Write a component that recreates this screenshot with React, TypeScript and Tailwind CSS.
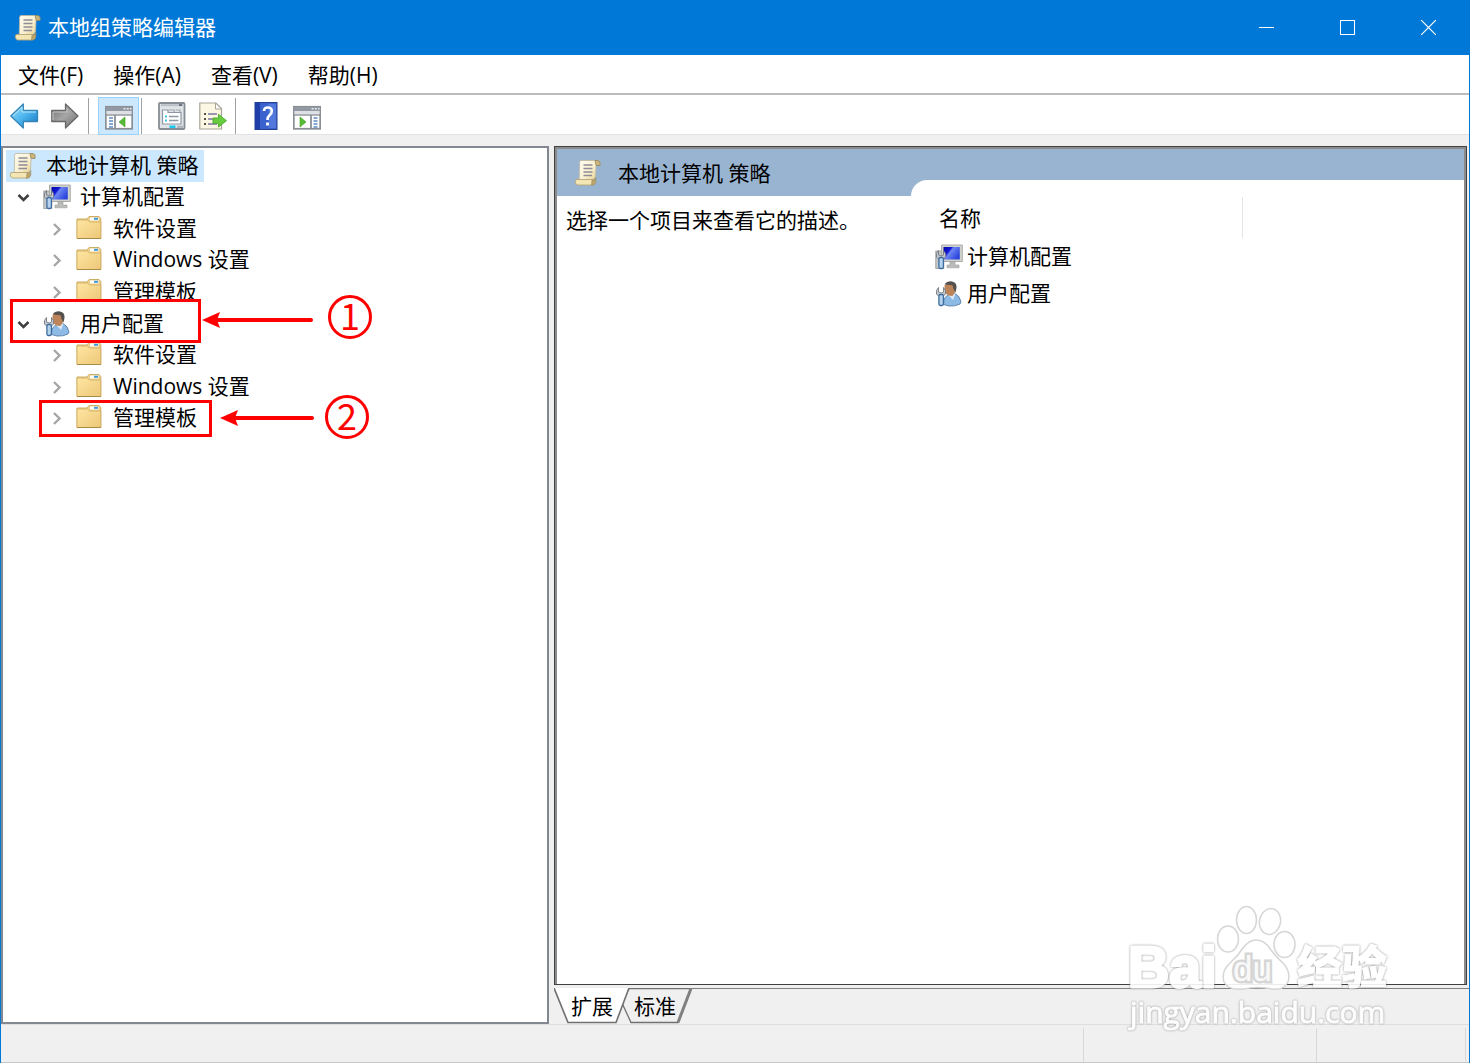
import { useState, type ReactNode } from "react";

interface IconProps {
  className?: string;
}

function ScrollIcon({ className = "" }: IconProps) {
  return (
    <svg viewBox="0 0 28 28" className={`size-7 shrink-0 ${className}`} aria-hidden="true">
      <defs>
        <linearGradient id="paper" x1="0" y1="0" x2="1" y2="1">
          <stop offset="0" stopColor="#fffdf3" />
          <stop offset="0.6" stopColor="#f8efce" />
          <stop offset="1" stopColor="#e3cf8e" />
        </linearGradient>
      </defs>
      <path d="M6.5 1.500 Q5 3 5.6 6 L5.2 21 H19 L21.5 18 L22 7 L22 1.500 Z" fill="url(#paper)" stroke="#bfb6a0" strokeWidth="0.8" />
      <path d="M21 1.500 H24 Q27 2 26 6.500 H22.3 Z" fill="#cdb67b" stroke="#96885f" strokeWidth="0.8" />
      <path d="M2 20.5 H18.5 V26 H3.5 Q.3 24.5 2 20.5 Z" fill="#f4e6b4" stroke="#b5a676" strokeWidth="0.9" />
      <path d="M18 21 Q20.5 21.5 21.8 18.5 V23 Q21 26.5 17.5 26.3 Z" fill="#bfa667" stroke="#96885f" strokeWidth="0.6" />
      <path d="M9.500 6 H18.500 M9.5 9.500 H18.5 M9.5 13 H18.5 M9.5 16.500 H18" stroke="#8f8d98" strokeWidth="1.4" />
    </svg>
  );
}

function Wrench() {
  return (
    <g>
      <path d="M3.500 7.500 L1.500 10.500 V14 L4.500 17 H7.5 L10.5 14 V10.500 L8.5 7.500 V12 L6.3 13 L3.500 12 Z" fill="#c3c9ce" stroke="#747b81" strokeWidth="0.9" />
      <rect x="3.900" y="14.500" width="4.500" height="11" rx="1.4" fill="#b5d3ec" stroke="#3f6c9e" strokeWidth="1.3" />
    </g>
  );
}

function ComputerIcon({ className = "" }: IconProps) {
  return (
    <svg viewBox="0 0 28 28" className={`size-7 shrink-0 ${className}`} aria-hidden="true">
      <defs>
        <linearGradient id="screen" x1="0" y1="0" x2="1" y2="0.6">
          <stop offset="0" stopColor="#0509a4" />
          <stop offset="0.38" stopColor="#1319d6" />
          <stop offset="0.48" stopColor="#6d86f3" />
          <stop offset="1" stopColor="#2b45dd" />
        </linearGradient>
      </defs>
      <rect x="0.8" y="8" width="8" height="17.5" fill="#c4c7c9" stroke="#96999b" strokeWidth="0.8" />
      <path d="M6.5 2 H27.3 V18.5 H6.5 Z" fill="#d0d1cb" stroke="#a4a6a4" strokeWidth="0.9" />
      <rect x="8.500" y="4" width="16.300" height="12.500" fill="url(#screen)" />
      <path d="M15 18.8 H20 V22 H24 V24.8 H12 V22 H15 Z" fill="#b9bcb9" stroke="#9a9d9b" strokeWidth="0.6" />
      <Wrench />
    </svg>
  );
}

function UserIcon({ className = "" }: IconProps) {
  return (
    <svg viewBox="0 0 28 28" className={`size-7 shrink-0 ${className}`} aria-hidden="true">
      <path d="M8.5 24.5 L9 19 L13 14.5 L20 13.5 Q25 16 26 22 L25 24 Q20 26.5 14 26 Z" fill="#8ebbe6" stroke="#587fa8" strokeWidth="0.9" />
      <path d="M13 14.5 L18 20 L20.5 13.5 Z" fill="#dbeaf6" />
      <path d="M9.500 5.5 Q12 3 16 3.5 L20.5 6 L20 12 L17.5 16 L13 15.500 L9.500 12 Z" fill="#bd8459" />
      <path d="M9.500 4.500 Q12 1 17 1.4 Q22 2 21.5 8 L20.5 12.500 L18.5 9 L17.5 5.3 Z" fill="#55514e" />
      <Wrench />
    </svg>
  );
}

function FolderIcon({ className = "" }: IconProps) {
  return (
    <svg viewBox="0 0 28 28" className={`size-7 shrink-0 ${className}`} aria-hidden="true">
      <defs>
        <linearGradient id="folder" x1="0" y1="0" x2="1" y2="1">
          <stop offset="0" stopColor="#ffe6a3" />
          <stop offset="1" stopColor="#ecc777" />
        </linearGradient>
      </defs>
      <path d="M1 23.500 V4 H11 L13 1.500 H23 L24.800 3.500 V23.500 Z" fill="#ecd08a" stroke="#c9a65a" strokeWidth="0.9" />
      <rect x="14" y="2.500" width="8.5" height="3" fill="#fff" />
      <rect x="18" y="2.800" width="4" height="2" fill="#3f97dc" />
      <path d="M1 23.500 V5 H11.5 L13.5 7 H24.800 V23.500 Z" fill="url(#folder)" stroke="#d1ae63" strokeWidth="0.8" />
      <path d="M1 23.500 H25" stroke="#a98b48" strokeWidth="1" />
    </svg>
  );
}

function BackArrow() {
  return (
    <svg viewBox="0 0 30 28" className="h-7 w-[30px]" aria-hidden="true">
      <defs>
        <linearGradient id="back" x1="0" y1="0" x2="1" y2="1">
          <stop offset="0" stopColor="#a5e0fb" />
          <stop offset="0.5" stopColor="#4bb5ee" />
          <stop offset="1" stopColor="#1672bf" />
        </linearGradient>
      </defs>
      <path d="M0.800 14 L13.300 2 V8.5 H27.500 V19.5 H13.300 V26 Z" fill="url(#back)" stroke="#3686b8" strokeWidth="1.3" strokeLinejoin="round" />
      <path d="M3 13.8 L12 5.2 V10 H26" fill="none" stroke="#b9e8fc" strokeWidth="1" />
    </svg>
  );
}

function ForwardArrow() {
  return (
    <svg viewBox="0 0 30 28" className="h-7 w-[30px]" aria-hidden="true">
      <defs>
        <linearGradient id="forward" x1="0" y1="0" x2="1" y2="1">
          <stop offset="0" stopColor="#6e6e6e" />
          <stop offset="0.5" stopColor="#a6a6a6" />
          <stop offset="1" stopColor="#6b6b6b" />
        </linearGradient>
      </defs>
      <path d="M27 14 L14.500 2 V8.5 H0.800 V19.5 H14.500 V26 Z" fill="url(#forward)" stroke="#686868" strokeWidth="1.3" strokeLinejoin="round" />
      <path d="M2 18 V10 H16 V5.5" fill="none" stroke="#c3c3c3" strokeWidth="1" />
    </svg>
  );
}

function PaneIcon({ side }: { side: "left" | "right" }) {
  const left = side === "left";
  const lines = left ? 4 : 20.5;
  return (
    <svg viewBox="0 0 28 28" className="size-7" aria-hidden="true">
      <rect x="0.8" y="4.8" width="26.4" height="22" fill="#fff" stroke="#8b9097" strokeWidth="1.8" />
      <rect x="1" y="5" width="26" height="4" fill="#9399a2" />
      <path d="M18.5 6.8 H20.5 M21.8 6.8 H23.8 M25 6.8 H26.5" stroke="#e6e9ed" strokeWidth="1.6" />
      <rect x="1.6" y="9" width="24.8" height="3.3" fill="#dde1e6" />
      <path d="M1 13 H27" stroke="#8b9097" strokeWidth="1.4" />
      <path d={left ? "M10 13 V26.5" : "M18 13 V26.5"} stroke="#8b9097" strokeWidth="1.8" />
      <path d={`M${lines} 16 h4 M${lines} 19 h4 M${lines} 22 h4 M${lines} 25 h4`} stroke="#5e8cc2" strokeWidth="1.5" />
      <path d={left ? "M20 15 V25 L14 20 Z" : "M7 15 V25 L13 20 Z"} fill="#56bb35" stroke="#3c9e22" strokeWidth="0.6" />
    </svg>
  );
}

function PropertiesIcon() {
  return (
    <svg viewBox="0 0 28 28" className="size-7" aria-hidden="true">
      <rect x="1" y="1" width="25.5" height="26" rx="1" fill="#e1e4e7" stroke="#878d94" strokeWidth="1.8" />
      <path d="M3 3.2 H25" stroke="#b9bec7" strokeWidth="2" />
      <path d="M21 3 H24" stroke="#596273" strokeWidth="1.6" />
      <path d="M4.5 8 H10 V10.5 H23 V22 H4.5 Z" fill="#fff" stroke="#8d97a5" strokeWidth="1.2" />
      <path d="M11 8 H16 V10 M17.5 8 H22 V10" fill="none" stroke="#9fa7b2" strokeWidth="1.2" />
      <path d="M7 14.5 H9 M7 18.5 H9" stroke="#38c5e8" strokeWidth="1.8" />
      <path d="M11 14.5 H20.5 M11 18.5 H20.5" stroke="#8d97a5" strokeWidth="1.4" />
      <rect x="11.5" y="23.5" width="6" height="2.5" fill="#1bc8ef" />
      <path d="M19 24.8 H25" stroke="#aeb3b9" strokeWidth="2.2" />
    </svg>
  );
}

function ExportIcon() {
  return (
    <svg viewBox="0 0 28 28" className="size-7" aria-hidden="true">
      <path d="M.8 1 H17 L22.5 6.5 V27 H.8 Z" fill="#fbf7e3" stroke="#a8a595" strokeWidth="1.2" />
      <path d="M16.5 1 V7 H22.5 Z" fill="#fff" stroke="#a8a595" strokeWidth="1" />
      <path d="M5 12 H7 M5 17 H7 M5 22 H7" stroke="#54504b" strokeWidth="1.8" />
      <path d="M9 12 H18 M9 17 H15 M9 22 H18" stroke="#7b76a0" strokeWidth="1.3" />
      <path d="M14 16 H19.5 V12.3 L27.5 18.7 L19.5 25 V21.3 H14 Z" fill="#67cd40" stroke="#48aa28" strokeWidth="0.9" />
    </svg>
  );
}

function HelpIcon() {
  return (
    <svg viewBox="0 0 28 28" className="size-7" aria-hidden="true">
      <rect x="3" y="0.5" width="22" height="27" fill="#3a62cf" stroke="#24408f" strokeWidth="1" />
      <path d="M3 .5 H8 V27.5 H3 Z" fill="#1f3ea8" />
      <path d="M16 2 H24 V26 H17 Z" fill="#5b82de" opacity="0.7" />
      <path d="M12 9 Q12 5.500 15.500 5.500 Q19.8 5.500 19.8 9 Q19.8 11.5 17.500 13.3 Q15.500 14.8 15.500 18" fill="none" stroke="#fff" strokeWidth="2.6" />
      <rect x="14.100" y="20.5" width="2.800" height="3" fill="#fff" />
    </svg>
  );
}

function ToolButton({ label, active = false, children }: { label: string; active?: boolean; children: ReactNode }) {
  return (
    <button
      type="button"
      aria-label={label}
      className={`flex h-[38px] w-[41px] items-center justify-center border ${
        active ? "border-[#99d1ff] bg-[#cce8ff]" : "border-transparent"
      }`}
    >
      {children}
    </button>
  );
}

function ToolDivider() {
  return <span className="mr-[9px] ml-0.5 h-9 w-px bg-[#a0a0a0]" />;
}

type TreeIcon = "scroll" | "computer" | "user" | "folder";

interface TreeRow {
  level: number;
  icon: TreeIcon;
  text: string;
}

const treeRows: TreeRow[] = [
  { level: 0, icon: "scroll", text: "本地计算机 策略" },
  { level: 1, icon: "computer", text: "计算机配置" },
  { level: 2, icon: "folder", text: "软件设置" },
  { level: 2, icon: "folder", text: "Windows 设置" },
  { level: 2, icon: "folder", text: "管理模板" },
  { level: 1, icon: "user", text: "用户配置" },
  { level: 2, icon: "folder", text: "软件设置" },
  { level: 2, icon: "folder", text: "Windows 设置" },
  { level: 2, icon: "folder", text: "管理模板" },
];

const icons = {
  scroll: ScrollIcon,
  computer: ComputerIcon,
  user: UserIcon,
  folder: FolderIcon,
};

function Chevron({ open }: { open: boolean }) {
  return (
    <svg viewBox="0 0 34 20" className="mr-[3px] h-5 w-[34px] shrink-0" fill="none" aria-hidden="true">
      {open ? (
        <path d="M12.5 8 L17.5 13 L22.5 8" stroke="#404040" strokeWidth="2.6" />
      ) : (
        <path d="M15 5 L20.5 10.500 L15 16" stroke="#a6a6a6" strokeWidth="2.4" />
      )}
    </svg>
  );
}

function PolicyTree() {
  const [selected, setSelected] = useState(0);

  return (
    <ul className="flex h-[284px] flex-col" role="tree">
      {treeRows.map((row, i) => {
        const Icon = icons[row.icon];
        return (
          <li key={i} className="flex flex-1" role="treeitem" aria-selected={i === selected}>
            <button
              type="button"
              onClick={() => setSelected(i)}
              className={`flex items-center pr-1.5 whitespace-nowrap ${
                row.level === 2 ? "pl-[33px]" : row.level === 0 ? "pl-[3px]" : ""
              } ${i === selected ? "bg-[#cce8ff]" : ""}`}
            >
              {row.level > 0 && <Chevron open={row.level === 1} />}
              <Icon className="mr-[9px]" />
              <span className="pb-0.5">{row.text}</span>
            </button>
          </li>
        );
      })}
    </ul>
  );
}

function StepArrow({ className = "" }: IconProps) {
  return (
    <svg viewBox="0 0 112 18" className={`absolute h-[18px] w-28 ${className}`} aria-hidden="true">
      <path d="M12 9 H109" stroke="#f00" strokeWidth="4" strokeLinecap="round" />
      <path d="M0 9 L18 1 L15 9 L18 17 Z" fill="#f00" />
    </svg>
  );
}

function ShortStepArrow({ className = "" }: IconProps) {
  return (
    <svg viewBox="0 0 96 18" className={`absolute h-[18px] w-24 ${className}`} aria-hidden="true">
      <path d="M12 9 H92" stroke="#f00" strokeWidth="4" strokeLinecap="round" />
      <path d="M0 9 L18 1 L15 9 L18 17 Z" fill="#f00" />
    </svg>
  );
}

function StepNumber({ value, className = "" }: { value: number; className?: string }) {
  return (
    <span
      className={`absolute flex size-11 items-center justify-center rounded-full border-[3px] border-[#f00] pb-1.5 font-['Noto_Sans_CJK_SC',sans-serif] text-4xl leading-none text-[#f00] ${className}`}
    >
      {value}
    </span>
  );
}

function Watermark() {
  return (
    <svg viewBox="0 0 270 135" className="pointer-events-none absolute right-[75px] bottom-7 h-[135px] w-[270px]">
      <g fill="#fff" fillOpacity="0.9" stroke="#d6d6d6" strokeWidth="1.5">
        <ellipse cx="122.5" cy="20" rx="10" ry="13.5" />
        <ellipse cx="146" cy="21.5" rx="10.5" ry="13" transform="rotate(12 146 21.5)" />
        <ellipse cx="104" cy="39" rx="10.5" ry="13" />
        <ellipse cx="160.5" cy="44.5" rx="10.5" ry="13" />
        <path d="M132 40 Q141 40 147 50 Q152 57 160 64 Q167 73 164 82 Q159 91 148 89 Q132 86 120 89 Q105 91 100 82 Q97 71 106 63 Q114 56 119 48 Q125 40 132 40 Z" />
        <text x="109" y="81" fontSize="35" fontWeight="400" fontFamily="Liberation Sans, sans-serif" strokeWidth="5" paintOrder="stroke">du</text>
      </g>
      <g fill="#fff" stroke="#fff" strokeLinejoin="round" className="opacity-90 drop-shadow-[0_0_1px_#888]">
        <text x="4" y="87" fontSize="57" fontWeight="700" fontFamily="Liberation Sans, sans-serif" strokeWidth="3">Bai</text>
        <text x="173" y="84" fontSize="45" fontWeight="900" fontFamily="Noto Sans CJK SC, sans-serif" strokeWidth="1">经验</text>
        <text x="6" y="123" fontSize="30" fontFamily="Open Sans, sans-serif" strokeWidth="1">jingyan.baidu.com</text>
      </g>
    </svg>
  );
}

function ViewTabs() {
  return (
    <div className="relative flex h-9 items-center border-t border-[#808080] pb-0.5 pl-[17px]">
      <svg viewBox="0 0 140 36" className="absolute -top-px left-0 h-9 w-[140px]" aria-hidden="true">
        <path d="M68 15 L77 34.5 H124 L137 0.5 H75 Z" fill="#f0f0f0" stroke="#707070" strokeWidth="1.3" />
        <path d="M124 34.5 L137 0.5" stroke="#808080" strokeWidth="3" />
        <path d="M0 0 L14 34.5 H62 L75 0 Z" fill="#fff" />
        <path d="M0 0 L14 34.5 H62 L75 0" fill="none" stroke="#707070" strokeWidth="1.6" />
      </svg>
      <button type="button" className="relative mr-[21px]">扩展</button>
      <button type="button" className="relative">标准</button>
    </div>
  );
}

export default function App() {
  return (
    <div className="relative flex min-h-screen flex-col border-x border-[#0078d7] bg-[#f0f0f0] font-['Open_Sans','Noto_Sans_CJK_SC',sans-serif] text-[21px] leading-7 text-black">
      <header className="flex h-[55px] items-center bg-[#0078d7] pl-[13px] text-white">
        <ScrollIcon />
        <h1 className="ml-1.5 flex-1 pb-0.5">本地组策略编辑器</h1>
        <button type="button" aria-label="最小化" className="flex h-full w-[81px] items-center justify-center">
          <span className="h-px w-[15px] bg-white" />
        </button>
        <button type="button" aria-label="最大化" className="flex h-full w-[81px] items-center justify-center">
          <span className="size-[15px] border border-white" />
        </button>
        <button type="button" aria-label="关闭" className="flex h-full w-[81px] items-center justify-center">
          <svg viewBox="0 0 15 15" className="size-[15px]" stroke="#fff" strokeWidth="1.2">
            <path d="M0 0 L15 15 M15 0 L0 15" />
          </svg>
        </button>
      </header>

      <nav className="flex h-10 items-center gap-[30px] border-b-2 border-[#bcbcbc] bg-white pt-0.5 pl-[17px]">
        <button type="button">文件(F)</button>
        <button type="button">操作(A)</button>
        <button type="button">查看(V)</button>
        <button type="button">帮助(H)</button>
      </nav>

      <div className="flex h-10 items-center border-b border-[#e3e3e3] bg-white pt-0.5 pl-[3px]">
        <ToolButton label="后退">
          <BackArrow />
        </ToolButton>
        <ToolButton label="前进">
          <ForwardArrow />
        </ToolButton>
        <ToolDivider />
        <ToolButton label="显示/隐藏控制台树" active>
          <PaneIcon side="left" />
        </ToolButton>
        <ToolDivider />
        <ToolButton label="属性">
          <PropertiesIcon />
        </ToolButton>
        <ToolButton label="导出列表">
          <ExportIcon />
        </ToolButton>
        <ToolDivider />
        <ToolButton label="帮助">
          <HelpIcon />
        </ToolButton>
        <ToolButton label="显示/隐藏操作窗格">
          <PaneIcon side="right" />
        </ToolButton>
      </div>

      <main className="flex flex-1 gap-[5px] pt-[11px]">
        <section className="relative w-[548px] shrink-0 border-2 border-[#828790] bg-white pt-0.5 pl-[3px]">
          <PolicyTree />
          <span className="absolute top-[151px] left-[7px] h-11 w-[191px] border-[3px] border-[#f00]" />
          <StepArrow className="top-[163px] left-[199px]" />
          <StepNumber value={1} className="top-[147px] left-[325px]" />
          <span className="absolute top-[252px] left-9 h-[37px] w-[173px] border-[3px] border-[#f00]" />
          <ShortStepArrow className="top-[261px] left-[217px]" />
          <StepNumber value={2} className="top-[247px] left-[322px]" />
        </section>

        <div className="flex min-w-0 flex-1 flex-col">
          <section className="mr-0.5 flex flex-1 border border-[#404040] bg-white">
            <div className="flex flex-1 border-2 border-b-0 border-[#8c8c8c]">
              <div className="w-[354px] shrink-0">
                <h2 className="flex h-[47px] items-center bg-[#99b4d1] pl-[17px]">
                  <ScrollIcon />
                  <span className="ml-4">本地计算机 策略</span>
                </h2>
                <p className="pt-2.5 pl-[9px] whitespace-nowrap">选择一个项目来查看它的描述。</p>
              </div>
              <div className="flex flex-1 flex-col bg-[#99b4d1] pt-[31px]">
                <div className="flex-1 rounded-tl-[16px] bg-white pt-[17px]">
                  <table className="w-[332px] border-collapse text-left">
                    <thead>
                      <tr className="h-[41px]">
                        <th className="border-r border-[#e5e5e5] p-0 pl-7 font-normal">名称</th>
                      </tr>
                    </thead>
                    <tbody>
                      <tr className="h-[37px]">
                        <td className="p-0 pl-6">
                          <span className="flex items-center gap-1">
                            <ComputerIcon />
                            <span className="pb-0.5">计算机配置</span>
                          </span>
                        </td>
                      </tr>
                      <tr className="h-[37px]">
                        <td className="p-0 pl-6">
                          <span className="flex items-center gap-1">
                            <UserIcon />
                            <span className="pb-0.5">用户配置</span>
                          </span>
                        </td>
                      </tr>
                    </tbody>
                  </table>
                </div>
              </div>
            </div>
          </section>
          <div className="h-[3px]" />
          <ViewTabs />
        </div>
      </main>

      <footer className="flex h-[39px] justify-end border-y border-t-[#dedede] border-b-[#c8c8c8] pt-[3px] pr-[3px]">
        <div className="w-[233px] border-l border-[#d9d9d9]" />
        <div className="w-[150px] border-x border-[#d9d9d9]" />
      </footer>

      <Watermark />
    </div>
  );
}
